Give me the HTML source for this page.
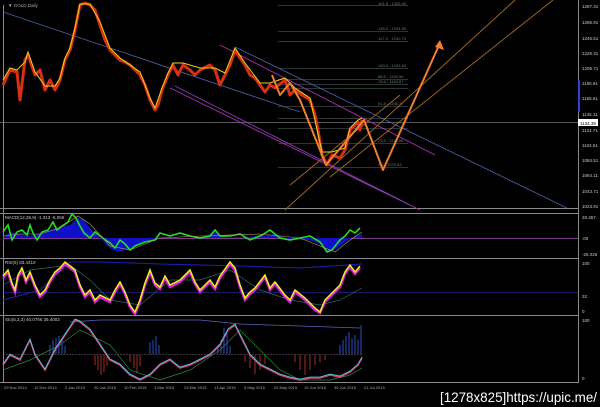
<!DOCTYPE html>
<html><head><meta charset="utf-8"><style>
html,body{margin:0;padding:0;background:#000;width:600px;height:407px;overflow:hidden}
svg{display:block}
text{font-family:"Liberation Sans",sans-serif}
</style></head><body>
<svg width="600" height="407" viewBox="0 0 600 407" xmlns="http://www.w3.org/2000/svg">
<rect width="600" height="407" fill="#000"/>
<!-- panel frames -->
<g stroke="#8a8a8a" stroke-width="1" fill="none">
<line x1="0" y1="208.5" x2="578" y2="208.5"/>
<line x1="0" y1="213.5" x2="578" y2="213.5"/>
<line x1="0" y1="258.5" x2="578" y2="258.5"/>
<line x1="0" y1="315.5" x2="578" y2="315.5"/>
<line x1="0" y1="382.5" x2="578" y2="382.5"/>
<line x1="578.5" y1="0" x2="578.5" y2="383"/>
<line x1="3.5" y1="5" x2="3.5" y2="383"/>
</g>
<line x1="0" y1="122.5" x2="578" y2="122.5" stroke="#777" stroke-width="0.8"/>
<!-- fib levels -->
<g stroke="#3a4a4a" stroke-width="0.8">
<line x1="278" y1="5.5" x2="408" y2="5.5"/><line x1="278" y1="31.5" x2="408" y2="31.5"/>
<line x1="278" y1="41.5" x2="408" y2="41.5"/><line x1="278" y1="68.5" x2="408" y2="68.5"/>
<line x1="278" y1="79.5" x2="408" y2="79.5"/><line x1="278" y1="84.5" x2="408" y2="84.5"/>
<line x1="278" y1="88.5" x2="408" y2="88.5"/><line x1="278" y1="106.5" x2="408" y2="106.5"/>
<line x1="278" y1="118.5" x2="408" y2="118.5"/><line x1="278" y1="128.5" x2="408" y2="128.5"/>
<line x1="278" y1="143.5" x2="408" y2="143.5"/><line x1="278" y1="167.5" x2="408" y2="167.5"/>
</g>
<g fill="#6a7a7a" font-size="4">
<text x="378" y="5">161.8 - 1305.40</text><text x="378" y="30">138.2 - 1254.59</text>
<text x="378" y="40">127.2 - 1240.73</text><text x="378" y="67">100.0 - 1205.63</text>
<text x="378" y="78">88.6 - 1190.96</text><text x="378" y="83">78.6 - 1184.57</text>
<text x="378" y="105">61.8 - 1156.37</text><text x="378" y="142">23.6 - 1110.08</text>
<text x="378" y="166">0.0 - 1075.63</text>
</g>
<!-- trend lines -->
<g fill="none" stroke-width="0.9">
<line x1="3" y1="12" x2="300" y2="112" stroke="#4a5aa0"/>
<line x1="235" y1="47" x2="567" y2="208" stroke="#4a5aa0"/>
<line x1="220" y1="45" x2="435" y2="155" stroke="#b030b0"/>
<line x1="170" y1="88" x2="420" y2="210" stroke="#b030b0"/>
<line x1="175" y1="86" x2="410" y2="205" stroke="#8040c0"/>
<line x1="285" y1="210" x2="515" y2="0" stroke="#a86a20"/>
<line x1="330" y1="177" x2="553" y2="0" stroke="#a86a20"/>
<line x1="290" y1="185" x2="400" y2="95" stroke="#a86a20"/>
</g>
<!-- price -->
<polyline fill="none" stroke="#d83010" stroke-width="3" stroke-linejoin="round" points="3,85 10,70 17,72 20,100 25,60 28,55 35,75 40,70 45,90 50,80 55,90 60,80 65,60 70,50 75,30 80,5 85,3 90,5 95,10 100,25 105,40 110,50 115,55 120,60 125,62 130,65 135,70 140,75 145,85 150,100 155,110 158,105 162,90 168,75 173,65 178,75 183,65 190,70 195,75 200,70 210,65 215,70 220,85 225,75 230,65 235,50 238,55 245,65 250,75 255,78 260,85 265,92 270,85 275,88 285,80 290,95 295,90 302,95 310,100 315,115 318,130 322,155 327,165 332,155 340,158 345,150 350,130 355,125 358,122 360,130 362,120"/>
<polyline fill="none" stroke="#f0d020" stroke-width="1" points="3,80 10,68 17,70 25,62 28,52 35,72 45,86 55,86 60,78 65,58 70,48 75,28 80,4 90,4 100,22 110,48 120,58 140,72 150,98 155,108 162,88 168,73 173,63 183,63 200,68 215,68 225,73 235,48 245,63 260,83 270,83 285,78 295,88 310,98 322,152 332,152 345,148 350,128 358,120 362,118"/>
<!-- orange zigzag -->
<polyline fill="none" stroke="#f08030" stroke-width="2" stroke-linejoin="round" points="272,75 280,95 290,83 300,100 326,165 364,120 383,170 440,43"/>
<polygon points="440,40 444,50 435,47" fill="#f08030"/>
<!-- MACD -->
<line x1="3" y1="238.5" x2="578" y2="238.5" stroke="#7a3a8a" stroke-width="1"/>
<polygon fill="#1010c8" points="3,238 10,232 20,234 30,236 45,232 55,228 62,226 70,225 78,218 84,220 90,228 100,238 110,248 118,252 125,250 135,246 145,242 160,238 200,238 215,232 225,238 260,236 275,234 290,240 310,240 320,244 328,252 335,250 345,242 355,236 362,234 362,238 3,238"/>
<polyline fill="none" stroke="#20e020" stroke-width="1.6" points="3,232 8,225 12,240 17,232 22,230 27,235 30,225 33,233 37,240 42,232 48,230 53,222 57,230 62,226 68,222 72,214 76,218 80,226 84,233 90,238 95,232 100,236 110,243 115,248 120,240 125,244 130,250 135,246 145,242 155,240 160,233 170,236 180,233 190,236 200,238 210,236 215,230 220,236 230,236 240,234 250,240 262,235 270,230 280,238 290,240 300,238 310,236 320,242 327,252 332,250 340,240 345,236 350,230 355,233 360,228"/>
<polyline fill="none" stroke="#b0a060" stroke-width="0.6" points="3,236 20,234 40,234 60,228 78,216 90,224 110,246 130,250 160,238 200,236 260,234 300,238 320,246 335,252 350,240 362,232"/>
<text x="5" y="219" fill="#ccc" font-size="4.5">MACD(12,26,9) -1.313 -5.066</text>
<!-- RSI -->
<polyline fill="none" stroke="#2020b0" stroke-width="1" points="3,300 40,290 70,262 100,262 160,264 200,265 240,266 300,268 362,264"/>
<line x1="3" y1="292.5" x2="578" y2="292.5" stroke="#20208a" stroke-width="0.8"/>
<polyline fill="none" stroke="#2a6a6a" stroke-width="0.7" points="3,285 30,270 70,265 90,280 110,300 140,305 170,280 200,280 230,270 260,290 290,300 320,305 340,300 362,288"/>
<polyline fill="none" stroke="#e020e0" stroke-width="2.5" points="3,278 8,272 12,285 15,292 18,277 22,270 26,282 30,274 35,287 40,297 45,292 50,282 55,274 60,270 65,264 70,268 75,272 80,287 85,297 90,292 95,302 100,297 110,302 115,292 120,284 125,294 130,307 135,314 140,302 145,285 150,272 155,285 160,289 165,278 170,287 180,282 190,272 195,284 200,292 210,282 215,289 220,278 230,264 235,270 240,287 245,300 250,294 255,290 265,277 270,290 275,284 285,297 290,302 295,292 305,300 315,310 320,313 325,302 330,297 335,292 340,287 345,274 350,267 355,274 360,268"/>
<polyline fill="none" stroke="#f0f020" stroke-width="1.5" points="3,276 8,270 12,283 15,290 18,275 22,268 26,280 30,272 35,285 40,295 45,290 50,280 55,272 60,268 65,262 70,266 75,270 80,285 85,295 90,290 95,300 100,295 110,300 115,290 120,282 125,292 130,305 135,312 140,300 145,283 150,270 155,283 160,287 165,276 170,285 180,280 190,270 195,282 200,290 210,280 215,287 220,276 230,262 235,268 240,285 245,298 250,292 255,288 265,275 270,288 275,282 285,295 290,300 295,290 305,298 315,308 320,312 325,300 330,295 335,290 340,285 345,272 350,265 355,272 360,266"/>
<text x="5" y="264" fill="#ccc" font-size="4.5">RSI(5) 83.4410</text>
<!-- Stoch -->
<line x1="3" y1="354.5" x2="362" y2="354.5" stroke="#7a6a7a" stroke-width="0.6" stroke-dasharray="2,1"/>
<g stroke="#2a50c0" stroke-width="1">
<path d="M50 354V345M53 354V340M56 354V338M59 354V336M62 354V340M65 354V346M150 354V342M153 354V340M156 354V336M159 354V345M218 354V345M221 354V340M224 354V328M227 354V333M230 354V346M340 354V345M343 354V340M346 354V336M349 354V332M352 354V338M355 354V335M358 354V340M361 354V325"/>
</g>
<g stroke="#a03020" stroke-width="1">
<path d="M95 355V365M98 355V370M101 355V375M104 355V372M107 355V366M130 355V362M134 355V368M137 355V373M140 355V366M245 355V362M250 355V368M255 355V374M260 355V370M265 355V364M295 355V362M300 355V370M305 355V375M310 355V370M315 355V365M320 355V362M325 355V360"/>
</g>
<polyline fill="none" stroke="#2a8a3a" stroke-width="0.7" points="3,370 30,360 60,345 80,330 110,345 130,370 160,380 190,370 220,350 240,330 260,350 280,370 300,380 330,380 350,375 362,368"/>
<polyline fill="none" stroke="#6060c0" stroke-width="0.7" points="70,322 100,320 200,320 240,324 300,326 360,328"/>
<polyline fill="none" stroke="#e04080" stroke-width="1.6" points="3,365 10,355 20,360 30,340 35,355 45,370 55,350 65,335 75,320 80,322 90,330 100,345 110,360 120,365 130,375 140,380 150,375 160,365 170,360 180,368 190,365 200,360 210,355 220,345 228,330 235,325 240,335 250,355 260,365 270,370 280,375 290,378 300,380 310,378 320,378 330,375 340,377 350,372 358,365 362,358"/>
<polyline fill="none" stroke="#40d0e0" stroke-width="0.8" points="3,364 10,354 20,359 30,339 35,354 45,369 55,349 65,334 75,319 80,321 90,329 100,344 110,359 120,364 130,374 140,379 150,374 160,364 170,359 180,367 190,364 200,359 210,354 220,344 228,329 235,324 240,334 250,354 260,364 270,369 280,374 290,377 300,379 310,377 320,377 330,374 340,376 350,371 358,364 362,357"/>
<text x="5" y="321" fill="#ccc" font-size="4.5">Sto(5,3,3) 40.0766 35.4002</text>
<!-- right axis -->
<rect x="578" y="80" width="2" height="32" fill="#3040e0"/>
<g fill="#ccc" font-size="4.5">
<text x="582" y="8">1287.31</text><text x="582" y="24">1266.91</text><text x="582" y="40">1246.51</text>
<text x="582" y="55">1226.31</text><text x="582" y="70">1205.71</text><text x="582" y="85">1185.91</text>
<text x="582" y="100">1165.51</text><text x="582" y="116">1145.11</text><text x="582" y="132">1124.71</text>
<text x="582" y="147">1104.51</text><text x="582" y="162">1084.51</text><text x="582" y="177">1064.11</text>
<text x="582" y="193">1043.71</text><text x="582" y="208">1023.91</text>
<text x="582" y="219">28.367</text><text x="582" y="240">.00</text><text x="582" y="256">-25.025</text>
<text x="582" y="265">100</text><text x="582" y="298">32</text><text x="582" y="313">0</text>
<text x="582" y="322">100</text><text x="582" y="380">0</text>
</g>
<rect x="578" y="119" width="20" height="7" fill="#fff"/>
<text x="580" y="125" font-size="4.5" fill="#000">1134.39</text>
<text x="8" y="7" fill="#aaa" font-size="4.5">▼ GOLD,Daily</text>
<!-- time axis -->
<g fill="#aaa" font-size="4">
<text x="4" y="389">29 Nov 2014</text><text x="34" y="389">12 Dec 2014</text><text x="65" y="389">2 Jan 2015</text>
<text x="94" y="389">20 Jan 2015</text><text x="124" y="389">10 Feb 2015</text><text x="154" y="389">3 Mar 2015</text>
<text x="184" y="389">23 Mar 2015</text><text x="214" y="389">13 Apr 2015</text><text x="244" y="389">5 May 2015</text>
<text x="274" y="389">22 May 2015</text><text x="304" y="389">10 Jun 2015</text><text x="334" y="389">30 Jun 2015</text>
<text x="364" y="389">21 Jul 2015</text>
</g>
<text x="440" y="402" fill="#fff" font-size="14" font-family="Liberation Sans Narrow, Liberation Sans, sans-serif" textLength="157" lengthAdjust="spacingAndGlyphs">[1278x825]https://upic.me/</text>
</svg>
</body></html>
